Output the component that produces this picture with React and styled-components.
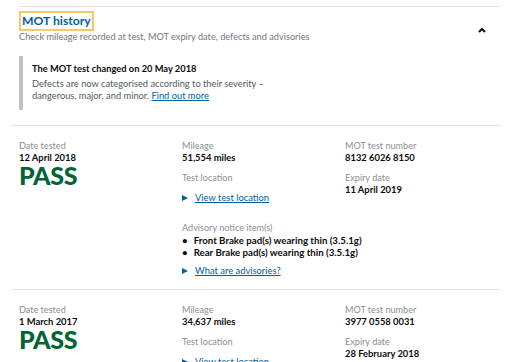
import styled, { createGlobalStyle } from 'styled-components';

const GlobalStyle = createGlobalStyle`
  body {
    margin: 0;
    background: #fff;
    font-family: Lato, "Liberation Sans", Arial, sans-serif;
    color: #0b0c0c;
  }
`;

const Page = styled.div`
  padding: 6px 12px 0 12px;
  height: 356px;
  overflow: hidden;
`;

const Header = styled.div`
  margin-left: 7px;
  border-top: 1px solid #e1e1e1;
  padding-top: 6px;
  display: flex;
  justify-content: space-between;
  align-items: flex-start;
`;

const Heading = styled.h2`
  margin: 0 0 0 2px;
  width: max-content;
  font-size: 12.2px;
  font-weight: bold;
  color: #005ea5;
  outline: 2px solid #f5c96b;
  padding: 1px 1px;
  line-height: 14px;
`;

const Subtitle = styled.p`
  margin: 2px 0 0;
  font-size: 9.2px;
  line-height: 12px;
  color: #6f777b;
`;

const Chevron = styled.svg`
  margin: 14px 14px 0 0;
`;

const Inset = styled.div`
  margin: 13px 0 15px 7px;
  border-left: 4px solid #bfc1c3;
  padding: 7px 0 8px 9px;
`;

const InsetTitle = styled.div`
  font-size: 9.3px;
  font-weight: bold;
  line-height: 12px;
  margin-bottom: 3px;
`;

const InsetText = styled.div`
  font-size: 9.3px;
  line-height: 12px;
  color: #505a5f;
`;

const Link = styled.a`
  color: #005ea5;
  text-decoration: underline;
`;

const Result = styled.div`
  border-top: 1px solid #e1e1e1;
  padding: 14px 0 12px 7px;
  display: grid;
  grid-template-columns: 163px 163px 1fr;
`;

const Col = styled.div`
  display: flex;
  flex-direction: column;
`;

const Label = styled.div`
  font-size: 9.1px;
  color: #8a8f93;
  line-height: 12px;
  margin-top: ${p => (p.$first ? 0 : 8)}px;
`;

const Value = styled.div`
  font-size: 9.4px;
  font-weight: bold;
  line-height: 12px;
`;

const Status = styled.div`
  font-size: 25px;
  font-weight: 900;
  letter-spacing: -0.3px;
  color: #006435;
  line-height: 22px;
`;

const Details = styled.div`
  margin-top: ${p => p.$gap}px;
  font-size: 9.4px;
  line-height: 12px;
  display: flex;
  align-items: center;
  gap: 7px;

  &::before {
    content: '';
    border-left: 6px solid #005ea5;
    border-top: 3.5px solid transparent;
    border-bottom: 3.5px solid transparent;
  }
`;

const List = styled.ul`
  margin: 0;
  padding: 0;
  list-style: none;
`;

const Item = styled.li`
  font-size: 9.7px;
  font-weight: bold;
  line-height: 12px;

  &::before {
    content: '•';
    margin-right: 6px;
  }
`;

const Advisory = styled.div`
  grid-column: 2 / 4;
  margin-top: 18px;
`;

const results = [
  {
    date: '12 April 2018',
    mileage: '51,554 miles',
    number: '8132 6026 8150',
    expiry: '11 April 2019',
    advisories: [
      'Front Brake pad(s) wearing thin (3.5.1g)',
      'Rear Brake pad(s) wearing thin (3.5.1g)',
    ],
  },
  {
    date: '1 March 2017',
    mileage: '34,637 miles',
    number: '3977 0558 0031',
    expiry: '28 February 2018',
    advisories: [],
  },
];

function TestResult({ r }) {
  return (
    <Result>
      <Col>
        <Label $first>Date tested</Label>
        <Value>{r.date}</Value>
        <Status>PASS</Status>
      </Col>
      <Col>
        <Label $first>Mileage</Label>
        <Value>{r.mileage}</Value>
        <Label>Test location</Label>
        <Details $gap={8}><Link href="#">View test location</Link></Details>
      </Col>
      <Col>
        <Label $first>MOT test number</Label>
        <Value>{r.number}</Value>
        <Label>Expiry date</Label>
        <Value>{r.expiry}</Value>
      </Col>
      {r.advisories.length > 0 && (
        <Advisory>
          <Label $first>Advisory notice item(s)</Label>
          <List>
            {r.advisories.map(a => <Item key={a}>{a}</Item>)}
          </List>
          <Details $gap={7}><Link href="#">What are advisories?</Link></Details>
        </Advisory>
      )}
    </Result>
  );
}

export default function App() {
  return (
    <>
      <GlobalStyle />
      <Page>
        <Header>
          <div>
            <Heading>MOT history</Heading>
            <Subtitle>Check mileage recorded at test, MOT expiry date, defects and advisories</Subtitle>
          </div>
          <Chevron width="8" height="6" viewBox="0 0 8 6">
            <polyline points="1,5 4,2 7,5" fill="none" stroke="#0b0c0c" strokeWidth="2" />
          </Chevron>
        </Header>
        <Inset>
          <InsetTitle>The MOT test changed on 20 May 2018</InsetTitle>
          <InsetText>
            Defects are now categorised according to their severity –<br />
            dangerous, major, and minor. <Link href="#">Find out more</Link>
          </InsetText>
        </Inset>
        {results.map(r => <TestResult key={r.number} r={r} />)}
      </Page>
    </>
  );
}
